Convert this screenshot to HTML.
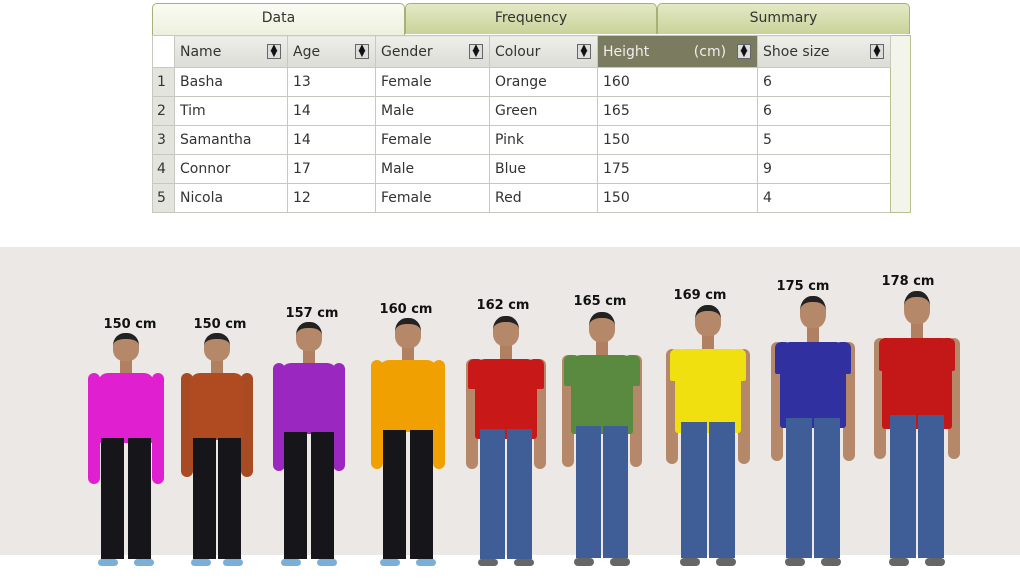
<!DOCTYPE html>
<html><head><meta charset="utf-8"><style>
*{margin:0;padding:0;box-sizing:border-box}
body{width:1020px;height:581px;background:#fff;position:relative;overflow:hidden;font-family:"DejaVu Sans","Liberation Sans",sans-serif}
.tab{position:absolute;top:3px;height:31px;border:1px solid #a8b078;border-bottom:none;border-radius:5px 5px 0 0;background:linear-gradient(#e4e9c4,#c9d29a);text-align:center;font-size:14px;line-height:29px;color:#333}
.tab.on{background:linear-gradient(#fafbf3,#eef0de);height:32px}
table{position:absolute;left:152px;top:35px;border-collapse:collapse;font-size:14px;color:#333}
td,th{border:1px solid #c8c8c0;height:29px;padding:0 5px;text-align:left;font-weight:normal;white-space:nowrap}
th{background:linear-gradient(#eeeeea,#dcdcd6);height:32px;position:relative}
th i{position:absolute;right:6px;top:8px;width:14px;height:15px;border:1px solid #666;background:#ddd;font-style:normal;font-size:9px;line-height:6px;text-align:center;color:#111}
td.n{background:#e4e4de;padding:0 4px;width:22px}
.band{position:absolute;left:0;top:247px;width:1020px;height:308px;background:#ebe8e5}
.lab{position:absolute;font-weight:bold;font-size:13px;color:#111;transform:translateX(-50%);white-space:nowrap}
.f{position:absolute;width:100px}
.f div{position:absolute}
.hd{left:50%;top:0;height:12%;width:26px;margin-left:-13px;border-radius:45% 45% 40% 40%;background:#b48868;border-top:6px solid #222}
.nk{left:50%;top:10%;height:8%;width:12px;margin-left:-6px;background:#b08060}
.arm{top:17%;height:44%;width:12px;background:#b48868;border-radius:6px}
.sl{top:17%;width:16px;border-radius:6px 6px 2px 2px}
.sh{left:50%;top:17%;border-radius:10px 10px 3px 3px}
.lg{top:45%;height:52%;width:23px}
.so{top:97%;height:3%;width:20px;border-radius:4px}
</style></head><body>
<div class="tab on" style="left:152px;width:253px">Data</div>
<div class="tab" style="left:405px;width:252px">Frequency</div>
<div class="tab" style="left:657px;width:253px">Summary</div>
<table>
<tr><th style="width:22px;background:#fff"></th><th style="width:113px">Name<i>▲<br>▼</i></th><th style="width:88px">Age<i>▲<br>▼</i></th><th style="width:114px">Gender<i>▲<br>▼</i></th><th style="width:108px">Colour<i>▲<br>▼</i></th><th style="width:160px;background:#7b7b5f;color:#eee">Height&nbsp;&nbsp;&nbsp;&nbsp;&nbsp;&nbsp;&nbsp;&nbsp;&nbsp;&nbsp;(cm)<i>▲<br>▼</i></th><th style="width:133px">Shoe size<i>▲<br>▼</i></th><th rowspan="6" style="width:20px;background:#f4f5ea;padding:0;border-color:#b8c090"></th></tr>
<tr><td class="n">1</td><td>Basha</td><td>13</td><td>Female</td><td>Orange</td><td>160</td><td>6</td></tr>
<tr><td class="n">2</td><td>Tim</td><td>14</td><td>Male</td><td>Green</td><td>165</td><td>6</td></tr>
<tr><td class="n">3</td><td>Samantha</td><td>14</td><td>Female</td><td>Pink</td><td>150</td><td>5</td></tr>
<tr><td class="n">4</td><td>Connor</td><td>17</td><td>Male</td><td>Blue</td><td>175</td><td>9</td></tr>
<tr><td class="n">5</td><td>Nicola</td><td>12</td><td>Female</td><td>Red</td><td>150</td><td>4</td></tr>
</table>
<div class="band"></div>

<div class="lab" style="left:130px;top:317px">150 cm</div>
<div class="lab" style="left:220px;top:317px">150 cm</div>
<div class="lab" style="left:312px;top:306px">157 cm</div>
<div class="lab" style="left:406px;top:302px">160 cm</div>
<div class="lab" style="left:503px;top:298px">162 cm</div>
<div class="lab" style="left:600px;top:294px">165 cm</div>
<div class="lab" style="left:700px;top:288px">169 cm</div>
<div class="lab" style="left:803px;top:279px">175 cm</div>
<div class="lab" style="left:908px;top:274px">178 cm</div>

<div class="f" style="left:76px;top:333px;height:233px"><div class="arm" style="left:12px;height:48%;background:#e020d0"></div><div class="arm" style="left:76px;height:48%;background:#e020d0"></div><div class="nk"></div><div class="hd"></div><div class="sh" style="width:56px;margin-left:-28px;height:30%;background:#e020d0"></div><div class="lg" style="left:25px;background:#15151a"></div><div class="lg" style="left:52px;background:#15151a"></div><div class="so" style="left:22px;background:#7ab0d8"></div><div class="so" style="left:58px;background:#7ab0d8"></div></div>

<div class="f" style="left:167px;top:333px;height:233px"><div class="arm" style="left:14px;height:45%;background:#a84a22"></div><div class="arm" style="left:74px;height:45%;background:#a84a22"></div><div class="nk"></div><div class="hd"></div><div class="sh" style="width:54px;margin-left:-27px;height:29%;background:#b04a20"></div><div class="lg" style="left:26px;background:#15151a"></div><div class="lg" style="left:51px;background:#15151a"></div><div class="so" style="left:24px;background:#7ab0d8"></div><div class="so" style="left:56px;background:#7ab0d8"></div></div>

<div class="f" style="left:259px;top:322px;height:244px"><div class="arm" style="left:14px;height:44%;background:#9a28c0"></div><div class="arm" style="left:74px;height:44%;background:#9a28c0"></div><div class="nk"></div><div class="hd"></div><div class="sh" style="width:56px;margin-left:-28px;height:29%;background:#9a28c0"></div><div class="lg" style="left:25px;background:#15151a"></div><div class="lg" style="left:52px;background:#15151a"></div><div class="so" style="left:22px;background:#7ab0d8"></div><div class="so" style="left:58px;background:#7ab0d8"></div></div>

<div class="f" style="left:358px;top:318px;height:248px"><div class="arm" style="left:13px;height:44%;background:#f0a000"></div><div class="arm" style="left:75px;height:44%;background:#f0a000"></div><div class="nk"></div><div class="hd"></div><div class="sh" style="width:58px;margin-left:-29px;height:29%;background:#f0a000"></div><div class="lg" style="left:25px;background:#15151a"></div><div class="lg" style="left:52px;background:#15151a"></div><div class="so" style="left:22px;background:#7ab0d8"></div><div class="so" style="left:58px;background:#7ab0d8"></div></div>

<div class="f" style="left:456px;top:316px;height:250px"><div class="arm" style="left:10px"></div><div class="arm" style="left:78px"></div><div class="sl" style="left:12px;height:12%;background:#c81818"></div><div class="sl" style="left:72px;height:12%;background:#c81818"></div><div class="nk"></div><div class="hd"></div><div class="sh" style="width:62px;margin-left:-31px;height:32%;background:#c81818"></div><div class="lg" style="left:24px;width:25px;background:#3f5e98"></div><div class="lg" style="left:51px;width:25px;background:#3f5e98"></div><div class="so" style="left:22px;background:#666"></div><div class="so" style="left:58px;background:#666"></div></div>

<div class="f" style="left:552px;top:312px;height:254px"><div class="arm" style="left:10px"></div><div class="arm" style="left:78px"></div><div class="sl" style="left:12px;height:12%;background:#5a8a40"></div><div class="sl" style="left:72px;height:12%;background:#5a8a40"></div><div class="nk"></div><div class="hd"></div><div class="sh" style="width:62px;margin-left:-31px;height:31%;background:#5a8a40"></div><div class="lg" style="left:24px;width:25px;background:#3f5e98"></div><div class="lg" style="left:51px;width:25px;background:#3f5e98"></div><div class="so" style="left:22px;background:#666"></div><div class="so" style="left:58px;background:#666"></div></div>

<div class="f" style="left:658px;top:305px;height:261px"><div class="arm" style="left:8px"></div><div class="arm" style="left:80px"></div><div class="sl" style="left:12px;height:12%;background:#f0e010"></div><div class="sl" style="left:72px;height:12%;background:#f0e010"></div><div class="nk"></div><div class="hd"></div><div class="sh" style="width:66px;margin-left:-33px;height:32%;background:#f0e010"></div><div class="lg" style="left:23px;width:26px;background:#3f5e98"></div><div class="lg" style="left:51px;width:26px;background:#3f5e98"></div><div class="so" style="left:22px;background:#666"></div><div class="so" style="left:58px;background:#666"></div></div>

<div class="f" style="left:763px;top:296px;height:270px"><div class="arm" style="left:8px"></div><div class="arm" style="left:80px"></div><div class="sl" style="left:12px;height:12%;background:#3030a0"></div><div class="sl" style="left:72px;height:12%;background:#3030a0"></div><div class="nk"></div><div class="hd"></div><div class="sh" style="width:66px;margin-left:-33px;height:32%;background:#3030a0"></div><div class="lg" style="left:23px;width:26px;background:#3f5e98"></div><div class="lg" style="left:51px;width:26px;background:#3f5e98"></div><div class="so" style="left:22px;background:#666"></div><div class="so" style="left:58px;background:#666"></div></div>

<div class="f" style="left:867px;top:291px;height:275px"><div class="arm" style="left:7px"></div><div class="arm" style="left:81px"></div><div class="sl" style="left:12px;height:12%;background:#c41818"></div><div class="sl" style="left:72px;height:12%;background:#c41818"></div><div class="nk"></div><div class="hd"></div><div class="sh" style="width:70px;margin-left:-35px;height:33%;background:#c41818"></div><div class="lg" style="left:23px;width:26px;background:#3f5e98"></div><div class="lg" style="left:51px;width:26px;background:#3f5e98"></div><div class="so" style="left:22px;background:#666"></div><div class="so" style="left:58px;background:#666"></div></div>
</body></html>
